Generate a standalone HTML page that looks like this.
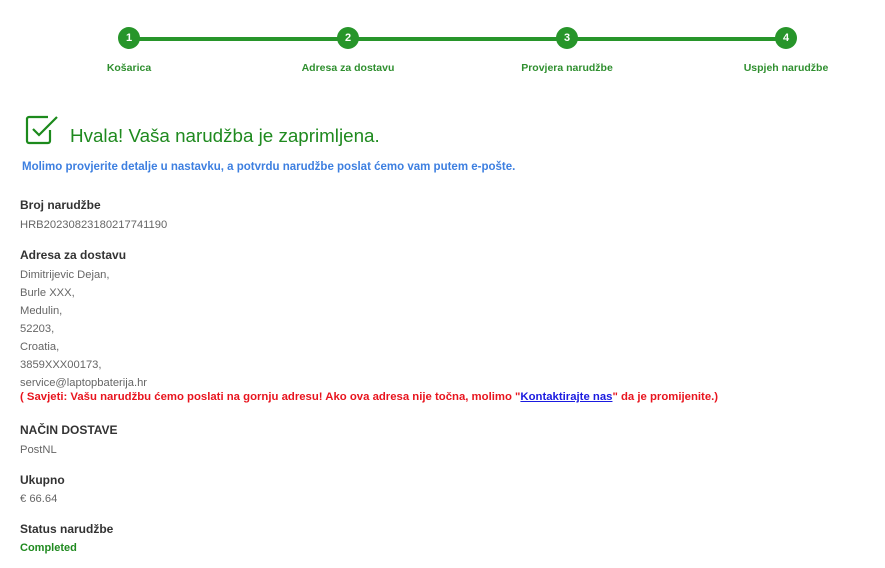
<!DOCTYPE html>
<html><head><meta charset="utf-8"><style>
body{margin:0;background:#fff;font-family:"Liberation Sans","DejaVu Sans",sans-serif;width:885px;height:568px;overflow:hidden;position:relative}
.a{position:absolute;white-space:nowrap}
.c{position:absolute;width:22px;height:22px;border-radius:50%;background:#27952a;color:#fff;font-size:11px;font-weight:bold;text-align:center;line-height:22px;top:27px}
.l{position:absolute;font-size:10.5px;font-weight:bold;color:#2f8f2f;top:62px;width:160px;text-align:center}
.h{font-size:12px;font-weight:bold;color:#333;left:20px}
.v{font-size:11.2px;color:#666;left:20px;line-height:18px}
</style></head><body>
<div class="a" style="left:129px;top:37px;width:657px;height:4px;background:#27952a"></div>
<div class="c" style="left:118px">1</div>
<div class="c" style="left:337px">2</div>
<div class="c" style="left:556px">3</div>
<div class="c" style="left:775px">4</div>
<div class="l" style="left:49px">Košarica</div>
<div class="l" style="left:268px">Adresa za dostavu</div>
<div class="l" style="left:487px">Provjera narudžbe</div>
<div class="l" style="left:706px">Uspjeh narudžbe</div>
<svg class="a" style="left:24px;top:112px" width="36" height="36" viewBox="0 0 36 36"><path d="M26 18v11a2 2 0 0 1-2 2H5a2 2 0 0 1-2-2V7a2 2 0 0 1 2-2h19" fill="none" stroke="#1c8a1c" stroke-width="2.2"/><path d="M9 17l6 6L33 5" fill="none" stroke="#1c8a1c" stroke-width="2.2"/></svg>
<div class="a" style="left:70px;top:125px;font-size:18.8px;color:#1f8a1f">Hvala! Vaša narudžba je zaprimljena.</div>
<div class="a" style="left:22px;top:161px;font-size:11.5px;font-weight:bold;color:#3d7fe0">Molimo provjerite detalje u nastavku, a potvrdu narudžbe poslat ćemo vam putem e-pošte.</div>
<div class="a h" style="top:198px">Broj narudžbe</div>
<div class="a v" style="top:216px">HRB20230823180217741190</div>
<div class="a h" style="top:248px">Adresa za dostavu</div>
<div class="a v" style="top:266px">Dimitrijevic Dejan,<br>Burle XXX,<br>Medulin,<br>52203,<br>Croatia,<br>3859XXX00173,<br>service@laptopbaterija.hr</div>
<div class="a" style="left:20px;top:391px;font-size:11.35px;font-weight:bold;color:#e8141e">( Savjeti: Vašu narudžbu ćemo poslati na gornju adresu! Ako ova adresa nije točna, molimo "<span style="color:#1a1ae0;text-decoration:underline">Kontaktirajte nas</span>" da je promijenite.)</div>
<div class="a h" style="top:423px">NAČIN DOSTAVE</div>
<div class="a v" style="top:441px">PostNL</div>
<div class="a h" style="top:473px">Ukupno</div>
<div class="a v" style="top:490px">€ 66.64</div>
<div class="a h" style="top:522px">Status narudžbe</div>
<div class="a" style="left:20px;top:542px;font-size:11px;font-weight:bold;color:#1f8a1f">Completed</div>
</body></html>
